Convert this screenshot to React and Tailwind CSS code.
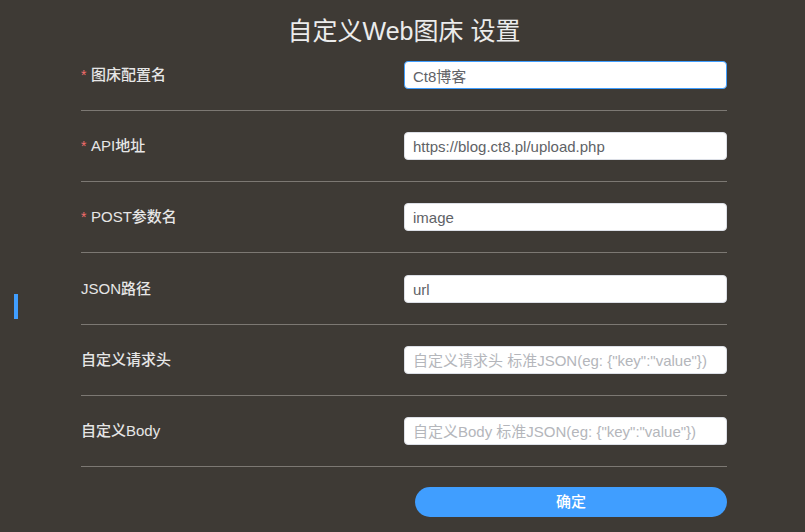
import { useState } from "react";

const fields = [
  { name: "name", label: "图床配置名", required: true, value: "Ct8博客", focused: true },
  { name: "api", label: "API地址", required: true, value: "https://blog.ct8.pl/upload.php" },
  { name: "post", label: "POST参数名", required: true, value: "image" },
  { name: "json", label: "JSON路径", value: "url" },
  { name: "headers", label: "自定义请求头", value: "", placeholder: '自定义请求头 标准JSON(eg: {"key":"value"})' },
  { name: "body", label: "自定义Body", value: "", placeholder: '自定义Body 标准JSON(eg: {"key":"value"})' },
];

export default function App() {
  const [form, setForm] = useState(
    Object.fromEntries(fields.map((f) => [f.name, f.value]))
  );

  const handleChange = (e) => {
    const { name, value } = e.target;
    setForm((prev) => ({ ...prev, [name]: value }));
  };

  return (
    <div
      className="relative min-h-screen bg-[#3e3a35] overflow-hidden"
      style={{ fontFamily: '"Liberation Sans", Arial, "Noto Sans CJK SC", sans-serif' }}
    >
      {/* active marker of the side menu */}
      <div className="absolute left-[14px] top-[294px] w-[4px] h-[25px] bg-[#409eff]" />

      <div className="ml-[81px] w-[646px]">
        <h1 className="pt-[15px] text-center text-[25px] leading-[32px] text-[#ececec]">
          自定义Web图床 设置
        </h1>

        <form className="flex flex-col">
          {fields.map((f, i) => (
            <div
              key={f.name}
              className={`flex items-center border-b border-[#7c7873] pb-[21px] ${i === 0 ? "pt-[14px]" : i === 3 ? "pt-[22px]" : "pt-[21px]"}`}
            >
              <label className="w-[323px] flex items-center text-[15px] font-medium text-[#e6e6e6]">
                {f.required ? (
                  <span className="w-[10px] text-[#f56c6c] text-[14px]">*</span>
                ) : null}
                {f.label}
              </label>
              <input
                name={f.name}
                value={form[f.name]}
                onChange={handleChange}
                placeholder={f.placeholder}
                className={`w-[323px] h-[28px] rounded-[4px] bg-white px-[8px] text-[15px] text-[#606266] outline-none placeholder:text-[#b4b6bb] border ${f.focused ? "border-[#409eff]" : "border-[#dcdfe6]"}`}
              />
            </div>
          ))}

          <div className="flex pt-[20px]">
            <button
              type="button"
              className="ml-[334px] w-[312px] h-[30px] rounded-full bg-[#409eff] text-white text-[15px] font-medium"
            >
              确定
            </button>
          </div>
        </form>
      </div>
    </div>
  );
}
